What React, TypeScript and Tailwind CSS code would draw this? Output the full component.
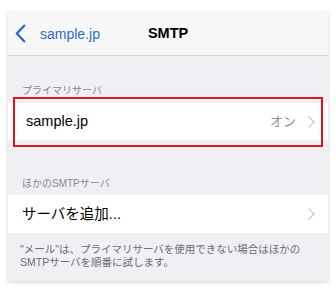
const FONT = "font-['Liberation_Sans','Noto_Sans_CJK_JP',sans-serif]";

function Chevron({ className }: { className?: string }) {
  return (
    <svg viewBox="0 0 8 14" className={className} fill="none">
      <path d="M1 1l6 6-6 6" stroke="currentColor" strokeWidth="1.4" strokeLinecap="round" strokeLinejoin="round" />
    </svg>
  );
}

export default function App() {
  return (
    <div className={`h-[293px] w-[336px] bg-white pl-[8px] pt-[12px] ${FONT}`}>
      <div className="relative h-[269px] w-[320px] bg-[#efeff4] shadow-[0_1px_4px_rgba(0,0,0,0.18)]">
        {/* nav bar */}
        <div className="flex h-[44px] items-center border-b border-[#d6d6da] bg-[#f7f7f8]">
          <svg viewBox="0 0 12 20" className="ml-[7px] h-[19px] w-[11px] text-[#2f6bc4]" fill="none">
            <path d="M10 1.5L2 10l8 8.5" stroke="currentColor" strokeWidth="2.6" strokeLinecap="round" strokeLinejoin="round" />
          </svg>
          <span className="ml-[14px] text-[14px] leading-none text-[#2f6bc4]">sample.jp</span>
          <span className="ml-[48px] text-[14.5px] font-bold leading-none text-black">SMTP</span>
        </div>

        {/* primary server */}
        <div className="flex h-[47px] items-end whitespace-nowrap px-[14px] pb-[7px] text-[10px] leading-none text-[#8a8a8f]">
          プライマリサーバ
        </div>
        <div className="flex h-[37px] items-center bg-white pl-[18px] pr-[13px]">
          <span className="flex-1 text-[14.5px] leading-none text-black">sample.jp</span>
          <span className="text-[13px] leading-none text-[#8e8e93]">オン</span>
          <Chevron className="ml-[12px] h-[12px] w-[7px] text-[#c4c4c8]" />
        </div>

        {/* other servers */}
        <div className="flex h-[55px] items-end whitespace-nowrap px-[14px] pb-[6px] text-[10px] leading-none text-[#8a8a8f]">
          ほかのSMTPサーバ
        </div>
        <div className="flex h-[38px] items-center bg-white pl-[14px] pr-[13px]">
          <span className="flex-1 text-[14.5px] leading-none text-black">サーバを追加...</span>
          <Chevron className="h-[12px] w-[7px] text-[#c4c4c8]" />
        </div>
        <p className="whitespace-nowrap px-[12px] pt-[10px] text-[10.5px] leading-[13px] text-[#6d6d72]">
          "メール"は、プライマリサーバを使用できない場合はほかの
          <br />
          SMTPサーバを順番に試します。
        </p>

        {/* highlight */}
        <div className="pointer-events-none absolute left-[5px] top-[85px] h-[50px] w-[310px] border-[2.5px] border-[#e3151f]" />
      </div>
    </div>
  );
}
